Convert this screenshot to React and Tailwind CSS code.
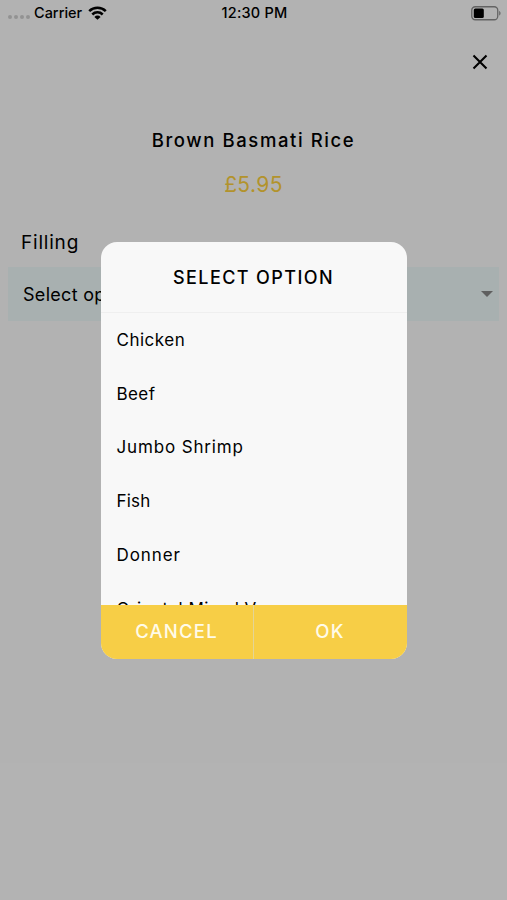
import { useState } from 'react'

const options = [
  { label: 'Chicken', tracking: 'tracking-[0.5px]' },
  { label: 'Beef', tracking: 'tracking-[0.4px]' },
  { label: 'Jumbo Shrimp', tracking: 'tracking-[0.85px]' },
  { label: 'Fish', tracking: 'tracking-[0.2px]' },
  { label: 'Donner', tracking: 'tracking-[0.9px]' },
  { label: 'Oriental Mixed Veg', tracking: 'tracking-[0.45px]' },
]

function StatusBar() {
  return (
    <div className="grid h-[26px] grid-cols-3 items-center pr-[6px] pl-2 text-[14.5px] leading-none font-medium">
      <div className="flex items-center">
        <div className="mt-[8px] mr-[4px] flex gap-[2px]">
          <span className="size-1 rounded-full bg-[#d2d2d2]" />
          <span className="size-1 rounded-full bg-[#d2d2d2]" />
          <span className="size-1 rounded-full bg-[#d2d2d2]" />
          <span className="size-1 rounded-full bg-[#d2d2d2]" />
        </div>
        <span>Carrier</span>
        <svg className="ml-[6px] h-[14px] w-[19px]" viewBox="0 0 19 14" fill="none" stroke="currentColor" strokeWidth="2.5" aria-hidden="true">
          <path d="M1.2 5.2a11.8 11.8 0 0 1 16.6 0" />
          <path d="M4.3 8.5a7.4 7.4 0 0 1 10.4 0" />
          <path d="M9.5 13.8 6.4 10.9a4.4 4.4 0 0 1 6.2 0z" fill="currentColor" stroke="none" />
        </svg>
      </div>
      <span className="text-center tracking-[0.2px]">12:30 PM</span>
      <svg className="h-[15px] w-[30px] justify-self-end" viewBox="0 0 30 15" fill="none" aria-hidden="true">
        <rect x="0.75" y="0.75" width="26" height="13" rx="3.5" stroke="#8e8e8e" strokeWidth="1.3" />
        <rect x="2.8" y="2.6" width="10" height="9.4" rx="1.5" fill="#000" />
        <path d="M28.2 5v4.6c1.8-.7 1.8-3.9 0-4.6z" fill="#8e8e8e" />
      </svg>
    </div>
  )
}

function SelectDialog({ selected, onSelect }) {
  return (
    <div role="dialog" className="flex h-[417px] w-[306px] flex-col overflow-hidden rounded-[16px] bg-[#f8f8f8]">
      <h2 className="flex h-[71px] shrink-0 items-center justify-center border-b border-[#efefef] text-[18px] font-medium tracking-[1.4px]">
        SELECT OPTION
      </h2>
      <ul className="min-h-0 flex-1 overflow-hidden pt-[0.6px]">
        {options.map(({ label, tracking }) => (
          <li key={label}>
            <button
              type="button"
              aria-pressed={selected === label}
              onClick={() => onSelect(label)}
              className={`flex h-[53.8px] w-full items-center px-4 text-left text-[17px] ${tracking}`}
            >
              {label}
            </button>
          </li>
        ))}
      </ul>
      <div className="flex h-[54px] shrink-0 bg-[#f7ce46] text-[18.5px] font-medium tracking-[1.2px] text-[#fffbe8]">
        <button type="button" className="w-[153px] border-r border-[#e4d596]">
          CANCEL
        </button>
        <button type="button" className="w-[153px]">
          OK
        </button>
      </div>
    </div>
  )
}

export default function App() {
  const [selected, setSelected] = useState(null)

  return (
    <div className="relative h-[900px] w-[507px] overflow-hidden bg-white font-[Inter,sans-serif] text-black">
      <StatusBar />
      <div className="flex h-[71px] items-center justify-end pr-[19px]">
        <button type="button" aria-label="Close">
          <svg className="size-4" viewBox="0 0 16 16" stroke="currentColor" strokeWidth="2.1" aria-hidden="true">
            <path d="M1.5 1.5l13 13M14.5 1.5l-13 13" />
          </svg>
        </button>
      </div>
      <div className="mt-[29px] text-center">
        <h1 className="text-[18.5px] leading-7 font-medium tracking-[1.6px]">Brown Basmati Rice</h1>
        <p className="mt-[17px] text-[21px] leading-7 tracking-[0.4px] text-[#ffd340]">£5.95</p>
      </div>
      <div className="mt-[30px] px-2">
        <p className="pl-[13px] text-[19px] leading-7 tracking-[0.8px]">Filling</p>
        <div className="mt-[10px] flex h-[54px] items-center justify-between bg-[#f1fdfd] pr-[6px] pl-[15px] text-[18px] tracking-[0.3px]">
          <span>Select option</span>
          <span className="border-x-[6px] border-t-[6px] border-x-transparent border-t-[#888]" />
        </div>
      </div>
      <div className="absolute inset-0 flex items-center justify-center bg-black/30 pt-px">
        <SelectDialog selected={selected} onSelect={setSelected} />
      </div>
    </div>
  )
}
